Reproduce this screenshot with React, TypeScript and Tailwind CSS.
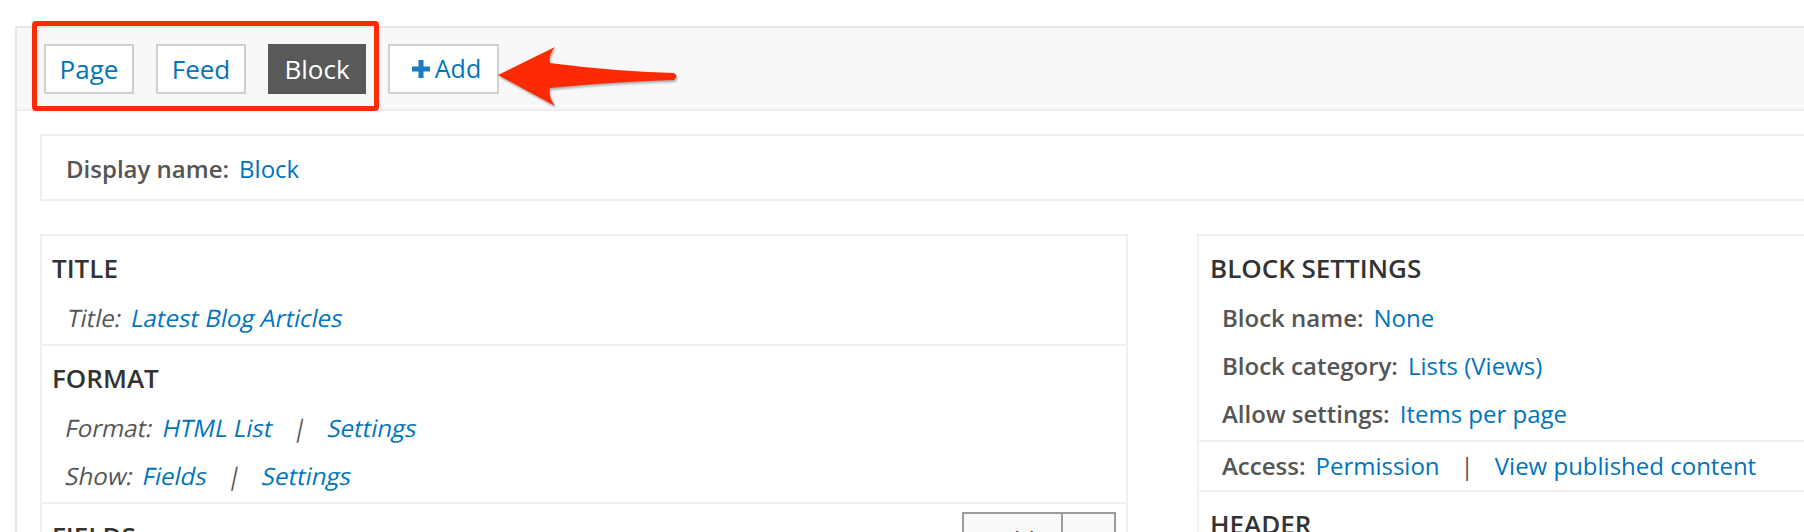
import React from 'react'

const link = 'text-[#0074bd]'

function Tab({ label, active, width }: { label: string; active?: boolean; width: string }) {
  return (
    <div
      className={
        'h-[50px] flex items-center justify-center border-2 text-[26px] ' +
        width +
        (active ? ' bg-[#595959] border-[#595959] text-white' : ' bg-white border-[#d0d0d0] ' + link)
      }
    >
      {label}
    </div>
  )
}

// the italic rows in the reference are slanted regular glyphs, so skew them
function Setting({ label, children, italic }: { label: string; children: React.ReactNode; italic?: boolean }) {
  return (
    <div className={'h-[48px] leading-[48px] whitespace-nowrap flex ' + (italic ? 'origin-left -skew-x-12' : '')}>
      <span className={'text-[#555] mr-[10px] ' + (italic ? 'font-medium' : 'font-semibold')}>{label}</span>
      {children}
    </div>
  )
}

function Sep() {
  return <span className="text-[#555] mx-[21px]">|</span>
}

function Heading({ children }: { children: React.ReactNode }) {
  return <h3 className="h-[36px] leading-[36px] text-[26px] font-semibold text-[#333] uppercase">{children}</h3>
}

export default function App() {
  return (
    <div className="relative w-[1804px] h-[532px] overflow-hidden bg-white font-['Open_Sans','Noto_Sans',sans-serif] text-[24px]">
      <div className="pt-[26px]">
        <div className="ml-[15px] w-[2400px] min-h-[600px] border-l-2 border-t-2 border-[#e6e6e6]">
          {/* display tabs */}
          <div className="flex gap-[22px] bg-[#f8f8f8] border-b-2 border-[#efefef] pl-[27px] pt-[16px] pb-[15px]">
            <Tab label="Page" width="w-[90px]" />
            <Tab label="Feed" width="w-[90px]" />
            <Tab label="Block" width="w-[98px]" active />
            <div className={'h-[50px] w-[111px] flex items-center justify-center gap-[5px] pl-[6px] border-2 border-[#d0d0d0] bg-white text-[25px] ' + link}>
              <svg width="18" height="18" viewBox="0 0 18 18">
                <path d="M6.5 0h5v6.5H18v5h-6.5V18h-5v-6.5H0v-5h6.5z" fill="#1a7dc2" />
              </svg>
              <span>Add</span>
            </div>
          </div>

          <div className="pl-[23px] pt-[23px]">
            {/* display name */}
            <div className="w-[2000px] border-2 border-[#f0f0f0] pt-[9px] pb-[6px] pl-[24px]">
              <div className="h-[48px] leading-[48px] flex">
                <span className="font-semibold text-[#555] mr-[10px]">Display name:</span>
                <span className={link}>Block</span>
              </div>
            </div>

            <div className="flex gap-[69px] mt-[33px] items-start">
              {/* left column */}
              <div className="w-[1088px] border-2 border-b-0 border-[#f0f0f0]">
                <div className="pt-[14px] pb-[2px] pl-[10px] border-b-2 border-[#f0f0f0]">
                  <Heading>Title</Heading>
                  <div className="mt-[8px] pl-[16px]">
                    <Setting label="Title:" italic>
                      <span className={link}>Latest Blog Articles</span>
                    </Setting>
                  </div>
                </div>
                <div className="pt-[14px] pb-[2px] pl-[10px] border-b-2 border-[#f0f0f0]">
                  <Heading>Format</Heading>
                  <div className="mt-[8px] pl-[14px]">
                    <Setting label="Format:" italic>
                      <span className={link}>HTML List</span>
                      <Sep />
                      <span className={link}>Settings</span>
                    </Setting>
                    <Setting label="Show:" italic>
                      <span className={link}>Fields</span>
                      <Sep />
                      <span className={link}>Settings</span>
                    </Setting>
                  </div>
                </div>
                <div className="pt-[8px] pl-[10px] pr-[10px] flex justify-between items-start h-[120px]">
                  <div className="mt-[6px]">
                    <Heading>Fields</Heading>
                  </div>
                  <div className="flex h-[56px] border-2 border-[#9c9c9c] bg-[#f9f9f9] text-[#333]">
                    <div className="w-[99px] flex items-center justify-center border-r-2 border-[#9c9c9c]">Add</div>
                    <div className="w-[51px]" />
                  </div>
                </div>
              </div>

              {/* right column */}
              <div className="w-[1088px] border-2 border-b-0 border-[#f0f0f0]">
                <div className="pt-[14px] pb-[2px] pl-[11px] border-b-2 border-[#f0f0f0]">
                  <Heading>Block settings</Heading>
                  <div className="mt-[8px] pl-[12px]">
                    <Setting label="Block name:">
                      <span className={link}>None</span>
                    </Setting>
                    <Setting label="Block category:">
                      <span className={link}>Lists (Views)</span>
                    </Setting>
                    <Setting label="Allow settings:">
                      <span className={link}>Items per page</span>
                    </Setting>
                  </div>
                </div>
                <div className="pl-[23px] border-b-2 border-[#f0f0f0]">
                  <Setting label="Access:">
                    <span className={link}>Permission</span>
                    <Sep />
                    <span className={link}>View published content</span>
                  </Setting>
                </div>
                <div className="pt-[14px] pl-[11px] h-[120px]">
                  <Heading>Header</Heading>
                </div>
              </div>
            </div>
          </div>
        </div>
      </div>

      {/* annotation: red highlight box */}
      <div className="absolute left-[32px] top-[21px] w-[347px] h-[90px] border-[5px] border-[#fe2a04] rounded-[4px]" />

      {/* annotation: arrow */}
      <svg
        className="absolute left-[490px] top-[40px] drop-shadow-[1px_2px_1px_rgba(0,0,0,0.3)]"
        width="200"
        height="75"
        viewBox="0 0 200 75"
      >
        <path
          d="M8 35 L65 7 Q58 16 60 23 Q120 31 184 33 Q189 36 184 40 Q120 42 60 48 Q58 56 65 66 Z"
          fill="#fe2a04"
        />
      </svg>
    </div>
  )
}
